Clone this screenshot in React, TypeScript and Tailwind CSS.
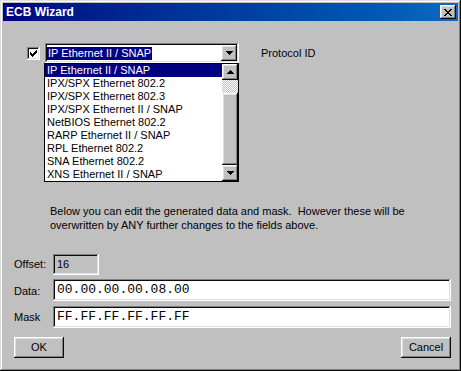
import React from "react";

const raised =
  "shadow-[inset_-1px_-1px_#0a0a0a,inset_1px_1px_#ffffff,inset_-2px_-2px_#808080,inset_2px_2px_#dfdfdf]";
const sunken =
  "shadow-[inset_-1px_-1px_#ffffff,inset_1px_1px_#808080,inset_-2px_-2px_#dfdfdf,inset_2px_2px_#0a0a0a]";

const protocols = [
  "IP Ethernet II / SNAP",
  "IPX/SPX Ethernet 802.2",
  "IPX/SPX Ethernet 802.3",
  "IPX/SPX Ethernet II / SNAP",
  "NetBIOS Ethernet 802.2",
  "RARP Ethernet II / SNAP",
  "RPL Ethernet 802.2",
  "SNA Ethernet 802.2",
  "XNS Ethernet II / SNAP",
];

const Arrow: React.FC<{ up?: boolean }> = ({ up }) => (
  <svg width="7" height="4" viewBox="0 0 7 4" shapeRendering="crispEdges" className={up ? "rotate-180" : ""}>
    <rect x="0" y="0" width="7" height="1" fill="#000" />
    <rect x="1" y="1" width="5" height="1" fill="#000" />
    <rect x="2" y="2" width="3" height="1" fill="#000" />
    <rect x="3" y="3" width="1" height="1" fill="#000" />
  </svg>
);

const CloseGlyph = () => (
  <svg width="8" height="7" viewBox="0 0 8 7" shapeRendering="crispEdges">
    <path
      fill="#000"
      d="M0 0h2v1H0zM6 0h2v1H6zM1 1h2v1H1zM5 1h2v1H5zM2 2h4v1H2zM3 3h2v1H3zM2 4h4v1H2zM1 5h2v1H1zM5 5h2v1H5zM0 6h2v1H0zM6 6h2v1H6z"
    />
  </svg>
);

const Check = () => (
  <svg width="7" height="7" viewBox="0 0 7 7" shapeRendering="crispEdges">
    <path
      fill="#000"
      d="M6 0h1v1H6zM5 1h2v1H5zM0 2h1v1H0zM4 2h3v1H4zM0 3h2v1H0zM3 3h3v1H3zM0 4h5v1H0zM1 5h3v1H1zM2 6h1v1H2z"
    />
  </svg>
);

export default function App() {
  return (
    <div
      className={`w-[461px] h-[371px] bg-[#c0c0c0] p-[3px] flex flex-col font-['Liberation_Sans',Arial,sans-serif] text-[11px] text-black shadow-[inset_-1px_-1px_#0a0a0a,inset_1px_1px_#dfdfdf,inset_-2px_-2px_#808080,inset_2px_2px_#ffffff]`}
    >
      {/* title bar */}
      <div className="h-[18px] flex items-center justify-between pl-[3px] pr-[2px] bg-linear-to-r from-[#000080] to-[#1068c0]">
        <span className="text-white font-bold text-[12px] leading-[18px]">ECB Wizard</span>
        <div className={`w-[16px] h-[14px] bg-[#c0c0c0] flex items-center justify-center ${raised}`}>
          <CloseGlyph />
        </div>
      </div>

      <div className="flex-1 flex flex-col pl-[11px] pr-[7px]">
        {/* protocol row */}
        <div className="mt-[22px] h-[20px] flex items-center">
          <div className={`ml-[13px] w-[13px] h-[13px] bg-white flex items-center justify-center ${sunken}`}>
            <Check />
          </div>
          <div className="relative ml-[5px]">
            <div className={`w-[194px] h-[20px] bg-white p-[2px] flex items-center justify-between ${sunken}`}>
              <span className="ml-[0px] px-[1px] leading-[13px] bg-[#000080] text-white">
                IP Ethernet II / SNAP
              </span>
              <div className={`w-[16px] h-[16px] bg-[#c0c0c0] flex items-center justify-center ${raised}`}>
                <Arrow />
              </div>
            </div>
            {/* open drop-down list */}
            <div className="absolute top-full left-[-1px] w-[195px] h-[119px] border border-black bg-white flex">
              <div className="flex-1 flex flex-col">
                {protocols.map((p, i) => (
                  <div
                    key={p}
                    className={`h-[13px] leading-[13px] pl-[2px] whitespace-nowrap ${
                      i === 0 ? "bg-[#000080] text-white" : ""
                    }`}
                  >
                    {p}
                  </div>
                ))}
              </div>
              <div className="w-[16px] flex flex-col">
                <div className={`h-[16px] bg-[#c0c0c0] flex items-center justify-center ${raised}`}>
                  <Arrow up />
                </div>
                <div className="h-[13px] bg-[image:conic-gradient(#c0c0c0_25%,#ffffff_0_50%,#c0c0c0_0_75%,#ffffff_0)] bg-[length:2px_2px]" />
                <div className={`flex-1 bg-[#c0c0c0] ${raised}`} />
                <div className={`h-[16px] bg-[#c0c0c0] flex items-center justify-center ${raised}`}>
                  <Arrow />
                </div>
              </div>
            </div>
          </div>
          <span className="ml-[22px]">Protocol ID</span>
        </div>

        {/* note */}
        <p className="mt-[141px] ml-[36px] leading-[14px] whitespace-pre">
          {"Below you can edit the generated data and mask.  However these will be\noverwritten by ANY further changes to the fields above."}
        </p>

        {/* offset */}
        <div className="mt-[22px] h-[21px] flex items-center">
          <span className="w-[39px]">Offset:</span>
          <div className={`w-[46px] h-[21px] bg-[#c0c0c0] pl-[4px] flex items-center ${sunken}`}>16</div>
        </div>

        {/* data */}
        <div className="mt-[4px] h-[22px] flex items-center">
          <span className="w-[39px] pt-[3px]">Data:</span>
          <div
            className={`flex-1 h-[22px] bg-white pl-[4px] flex items-center font-['Liberation_Mono','Courier_New',monospace] text-[13px] ${sunken}`}
          >
            00.00.00.00.08.00
          </div>
        </div>

        {/* mask */}
        <div className="mt-[5px] h-[22px] flex items-center">
          <span className="w-[39px]">Mask</span>
          <div
            className={`flex-1 h-[22px] bg-white pl-[4px] flex items-center font-['Liberation_Mono','Courier_New',monospace] text-[13px] ${sunken}`}
          >
            FF.FF.FF.FF.FF.FF
          </div>
        </div>

        {/* buttons */}
        <div className="mt-[9px] flex justify-between">
          <button className={`w-[50px] h-[21px] bg-[#c0c0c0] ${raised}`}>OK</button>
          <button className={`w-[50px] h-[21px] bg-[#c0c0c0] ${raised}`}>Cancel</button>
        </div>
      </div>
    </div>
  );
}
